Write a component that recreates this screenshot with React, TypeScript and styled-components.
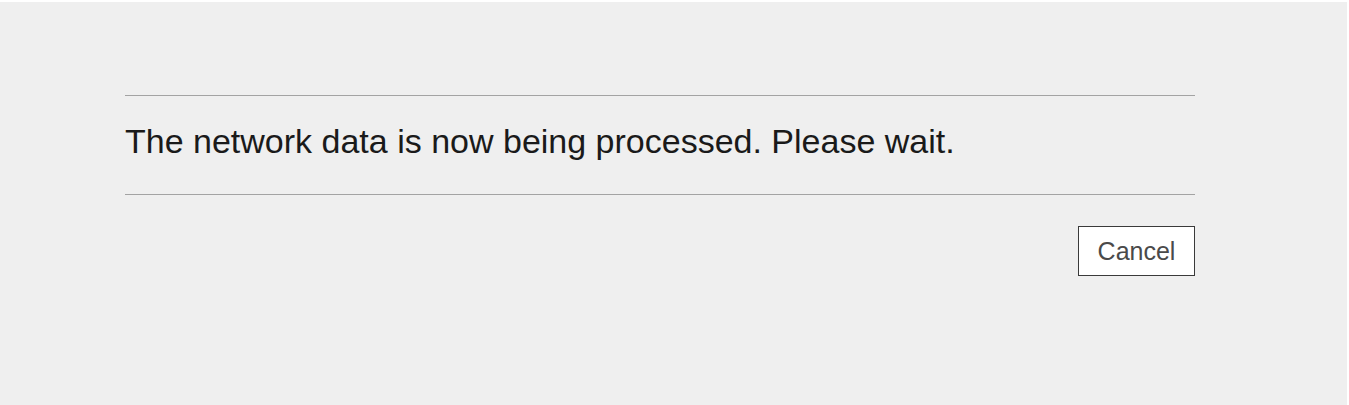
import React from "react";
import styled, { createGlobalStyle } from "styled-components";

const GlobalStyle = createGlobalStyle`
  html, body {
    margin: 0;
    padding: 0;
    background: #ffffff;
  }
  body {
    font-family: "Liberation Sans", Arial, sans-serif;
  }
`;

const Page = styled.div`
  box-sizing: border-box;
  width: 1347px;
  height: 403px;
  margin-top: 2px;
  padding: 93px 152px 0 125px;
  background: #efefef;
`;

const Panel = styled.section`
  display: flex;
  flex-direction: column;
  width: 1070px;
`;

const Message = styled.p`
  margin: 0;
  padding: 26px 0 33px;
  border-top: 1px solid #a3a3a3;
  border-bottom: 1px solid #a3a3a3;
  font-size: 34px;
  line-height: 39px;
  color: #1a1a1a;
`;

const Actions = styled.div`
  display: flex;
  justify-content: flex-end;
  padding-top: 31px;
`;

const Button = styled.button`
  box-sizing: border-box;
  width: 117px;
  height: 50px;
  padding: 0;
  border: 1px solid #3a3a3a;
  background: #ffffff;
  font-family: "Liberation Sans", Arial, sans-serif;
  font-size: 25px;
  color: #4a4a4a;
  cursor: pointer;
`;

export default function App() {
  return (
    <>
      <GlobalStyle />
      <Page>
        <Panel>
          <Message>
            The network data is now being processed. Please wait.
          </Message>
          <Actions>
            <Button type="button">Cancel</Button>
          </Actions>
        </Panel>
      </Page>
    </>
  );
}
